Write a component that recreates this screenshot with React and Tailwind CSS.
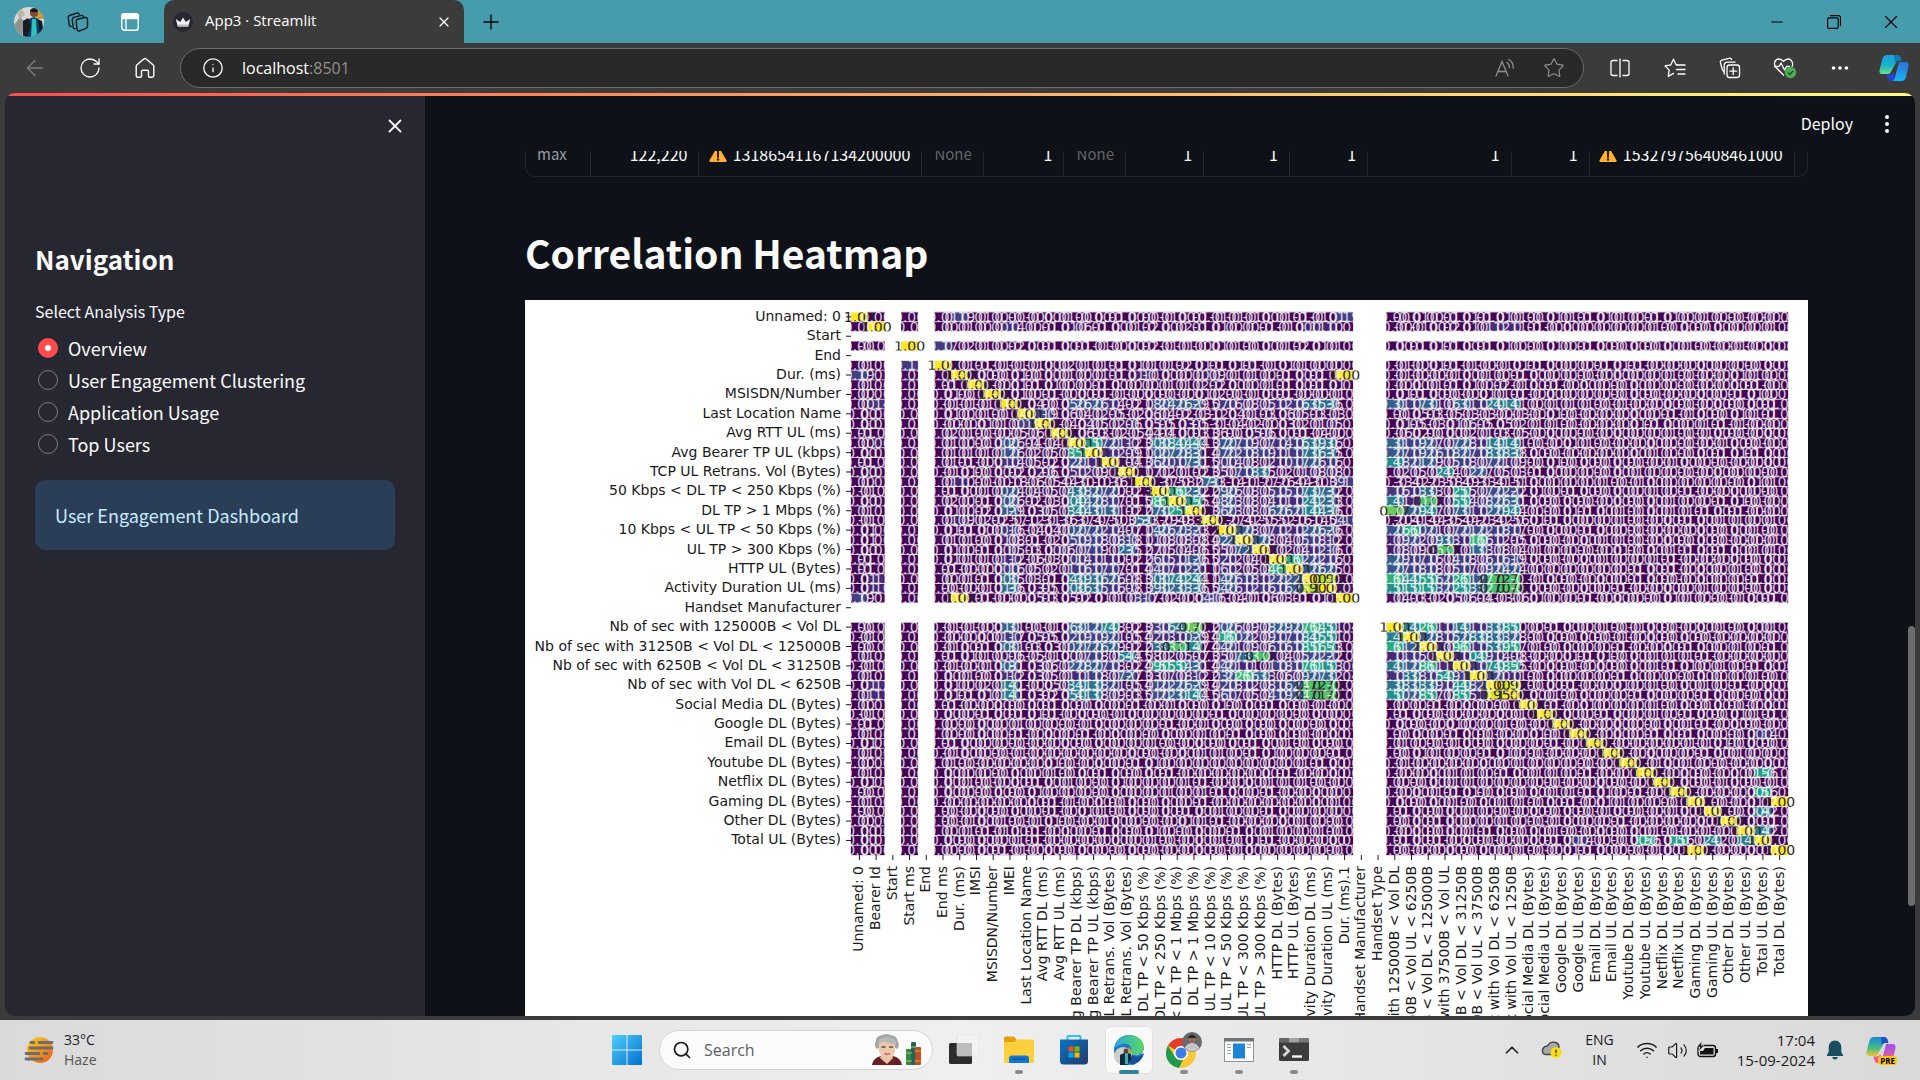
import React, { useState } from "react";
import {
  X,
  Plus,
  ArrowLeft,
  RotateCw,
  Info,
  Star,
  Minus,
  Ellipsis,
  EllipsisVertical,
  Search,
  ChevronUp,
  Wifi,
  Volume2,
} from "lucide-react";

/* ---------------------------------------------------------------- data */

const COLUMNS = [
  "Unnamed: 0",
  "Bearer Id",
  "Start",
  "Start ms",
  "End",
  "End ms",
  "Dur. (ms)",
  "IMSI",
  "MSISDN/Number",
  "IMEI",
  "Last Location Name",
  "Avg RTT DL (ms)",
  "Avg RTT UL (ms)",
  "Avg Bearer TP DL (kbps)",
  "Avg Bearer TP UL (kbps)",
  "TCP DL Retrans. Vol (Bytes)",
  "TCP UL Retrans. Vol (Bytes)",
  "DL TP < 50 Kbps (%)",
  "50 Kbps < DL TP < 250 Kbps (%)",
  "250 Kbps < DL TP < 1 Mbps (%)",
  "DL TP > 1 Mbps (%)",
  "UL TP < 10 Kbps (%)",
  "10 Kbps < UL TP < 50 Kbps (%)",
  "50 Kbps < UL TP < 300 Kbps (%)",
  "UL TP > 300 Kbps (%)",
  "HTTP DL (Bytes)",
  "HTTP UL (Bytes)",
  "Activity Duration DL (ms)",
  "Activity Duration UL (ms)",
  "Dur. (ms).1",
  "Handset Manufacturer",
  "Handset Type",
  "Nb of sec with 125000B < Vol DL",
  "Nb of sec with 1250B < Vol UL < 6250B",
  "Nb of sec with 31250B < Vol DL < 125000B",
  "Nb of sec with 37500B < Vol UL",
  "Nb of sec with 6250B < Vol DL < 31250B",
  "Nb of sec with 6250B < Vol UL < 37500B",
  "Nb of sec with Vol DL < 6250B",
  "Nb of sec with Vol UL < 1250B",
  "Social Media DL (Bytes)",
  "Social Media UL (Bytes)",
  "Google DL (Bytes)",
  "Google UL (Bytes)",
  "Email DL (Bytes)",
  "Email UL (Bytes)",
  "Youtube DL (Bytes)",
  "Youtube UL (Bytes)",
  "Netflix DL (Bytes)",
  "Netflix UL (Bytes)",
  "Gaming DL (Bytes)",
  "Gaming UL (Bytes)",
  "Other DL (Bytes)",
  "Other UL (Bytes)",
  "Total UL (Bytes)",
  "Total DL (Bytes)",
];

const EMPTY = [2, 4, 30, 31];
const TRAFFIC = [13, 14, 15, 16, 18, 19, 20, 22, 23, 24, 25, 26, 27, 28, 32, 33, 34, 35, 36, 37, 38, 39];
const LOW_RATE = [17, 21];

// Known coefficients, one list of [column, value] for each row.
const KNOWN = {
  0: [[6, 0.19], [29, 0.19]],
  1: [[9, 0.14], [13, 0.06], [27, 0.11], [28, 0.1], [38, 0.12], [39, 0.11]],
  3: [[5, 0.17]],
  9: [[13, 0.26], [14, 0.26], [15, 0.14], [16, 0.02], [18, 0.24], [19, 0.26], [20, 0.29], [22, 0.16], [23, 0.08], [24, 0.05], [25, 0.12], [26, 0.16], [27, 0.35], [28, 0.36], [32, 0.31], [33, 0.17], [34, 0.31], [35, 0.06], [36, 0.31], [37, 0.12], [38, 0.41], [39, 0.41]],
  10: [[11, 0.19], [17, -0.06]],
  13: [[14, 0.57], [15, 0.21], [16, 0.12], [18, 0.38], [19, 0.44], [20, 0.44], [22, 0.27], [23, 0.19], [24, 0.07], [25, 0.14], [26, 0.16], [27, 0.39], [28, 0.36], [32, 0.31], [33, 0.19], [34, 0.27], [35, 0.07], [36, 0.28], [37, 0.11], [38, 0.41], [39, 0.41]],
  14: [[15, 0.12], [16, 0.09], [18, 0.27], [19, 0.28], [20, 0.31], [22, 0.22], [23, 0.18], [24, 0.19], [25, 0.11], [26, 0.17], [27, 0.36], [28, 0.35], [32, 0.27], [33, 0.19], [34, 0.26], [35, 0.18], [36, 0.27], [37, 0.18], [38, 0.38], [39, 0.38]],
  15: [[16, 0.04], [18, 0.2], [19, 0.17], [20, 0.31], [22, 0.14], [23, 0.08], [24, 0.02], [27, 0.26], [28, 0.16], [32, 0.48], [33, 0.21], [34, 0.29], [35, 0.05], [36, 0.18], [37, 0.07], [38, 0.21], [39, 0.09]],
  16: [[18, 0.02], [19, 0.01], [20, 0.02], [22, 0.07], [23, 0.18], [24, 0.35], [25, 0.02], [26, 0.01], [27, 0.08], [28, 0.08], [32, 0.02], [33, 0.05], [34, 0.02], [35, 0.44], [36, 0.02], [37, 0.27], [38, 0.05], [39, 0.03]],
  17: [[21, 0.33], [6, 0.1], [29, 0.17], [11, -0.05]],
  18: [[19, 0.62], [20, 0.32], [22, 0.26], [23, 0.08], [24, 0.05], [25, 0.15], [26, 0.17], [27, 0.37], [28, 0.32], [32, 0.16], [33, 0.13], [34, 0.33], [35, 0.02], [36, 0.55], [37, 0.07], [38, 0.22], [39, 0.22]],
  19: [[20, 0.55], [22, 0.23], [23, 0.08], [24, 0.04], [25, 0.11], [26, 0.12], [27, 0.42], [28, 0.33], [32, 0.41], [33, 0.1], [34, 0.71], [35, 0.05], [36, 0.54], [37, 0.08], [38, 0.26], [39, 0.31]],
  20: [[22, 0.23], [23, 0.08], [24, 0.06], [25, 0.26], [26, 0.21], [27, 0.44], [28, 0.36], [32, 0.77], [33, 0.29], [34, 0.47], [35, 0.07], [36, 0.31], [37, 0.12], [38, 0.29], [39, 0.44]],
  21: [[6, 0.09], [29, 0.16]],
  22: [[23, 0.28], [24, 0.07], [25, 0.12], [26, 0.12], [27, 0.26], [28, 0.26], [32, 0.26], [33, 0.6], [34, 0.21], [35, 0.07], [36, 0.21], [37, 0.22], [38, 0.18], [39, 0.17]],
  23: [[24, 0.28], [25, 0.04], [26, 0.05], [27, 0.18], [28, 0.12], [32, 0.09], [33, 0.22], [34, 0.09], [35, 0.33], [36, 0.11], [37, 0.66], [38, 0.12], [39, 0.05]],
  24: [[25, 0.02], [26, 0.04], [27, 0.12], [28, 0.16], [32, 0.08], [33, 0.09], [34, 0.06], [35, 0.71], [36, 0.01], [37, 0.33], [38, 0.08], [39, 0.04]],
  25: [[26, 0.62], [27, 0.22], [28, 0.16], [32, 0.29], [33, 0.17], [34, 0.16], [35, 0.04], [36, 0.18], [37, 0.06], [38, 0.16], [39, 0.19]],
  26: [[27, 0.26], [28, 0.25], [32, 0.27], [33, 0.18], [34, 0.18], [35, 0.05], [36, 0.17], [37, 0.09], [38, 0.24], [39, 0.24]],
  27: [[28, 0.9], [32, 0.64], [33, 0.45], [34, 0.56], [35, 0.22], [36, 0.61], [37, 0.27], [38, 0.72], [39, 0.71]],
  28: [[32, 0.51], [33, 0.51], [34, 0.53], [35, 0.22], [36, 0.53], [37, 0.32], [38, 0.7], [39, 0.74]],
  32: [[33, 0.42], [34, 0.61], [35, 0.11], [36, 0.41], [37, 0.13], [38, 0.38], [39, 0.5]],
  33: [[34, 0.28], [35, 0.15], [36, 0.28], [37, 0.38], [38, 0.33], [39, 0.28]],
  34: [[35, 0.09], [36, 0.61], [37, 0.15], [38, 0.39], [39, 0.57]],
  35: [[36, 0.1], [37, 0.49], [38, 0.14], [39, 0.08]],
  36: [[37, 0.17], [38, 0.48], [39, 0.55]],
  37: [[38, 0.2], [39, 0.11]],
  38: [[39, 0.95]],
  6: [[29, 1]],
  43: [[54, 0.14]],
  47: [[54, 0.56]],
  49: [[54, 0.56]],
  50: [[55, 1], [54, 0.02]],
  51: [[54, 0.42]],
  53: [[54, 0.42]],
};

function noise(i, j) {
  const s = Math.sin(i * 127.1 + j * 311.7) * 43758.5453;
  return s - Math.floor(s);
}

function buildMatrix() {
  const n = COLUMNS.length;
  const m = COLUMNS.map(() => new Array(n).fill(0));
  for (let i = 0; i < n; i++) {
    for (let j = i; j < n; j++) {
      const r = noise(i + 1, j + 1);
      let v;
      if (i === j) v = 1;
      else if (j >= 40) v = (r - 0.45) * 0.014;
      else if (TRAFFIC.includes(i) && TRAFFIC.includes(j)) v = 0.04 + r * 0.14;
      else if (LOW_RATE.includes(i) || LOW_RATE.includes(j)) v = i < 9 ? (r - 0.5) * 0.05 : -0.1 - r * 0.5;
      else if (i < 9) v = (r - 0.4) * 0.03;
      else v = (r - 0.5) * 0.12;
      m[i][j] = v;
      m[j][i] = v;
    }
  }
  Object.entries(KNOWN).forEach(([row, list]) => {
    list.forEach(([col, v]) => {
      m[+row][col] = v;
      m[col][+row] = v;
    });
  });
  return m;
}

const MATRIX = buildMatrix();

const VIRIDIS = [
  [68, 1, 84],
  [72, 36, 117],
  [65, 68, 135],
  [53, 95, 141],
  [42, 120, 142],
  [33, 145, 140],
  [34, 168, 132],
  [68, 191, 112],
  [122, 209, 81],
  [189, 223, 38],
  [253, 231, 37],
];

function viridis(v) {
  const t = Math.min(1, Math.max(0, v)) * 10;
  const k = Math.min(9, Math.floor(t));
  const f = t - k;
  const c = VIRIDIS[k].map((a, x) => Math.round(a + (VIRIDIS[k + 1][x] - a) * f));
  return `rgb(${c[0]},${c[1]},${c[2]})`;
}

/* ------------------------------------------------------------- heatmap */

function Heatmap() {
  const x0 = 326;
  const y0 = 12;
  const cw = 937 / 56;
  const ch = 543 / 56;
  const ids = COLUMNS.map((_, k) => k).filter((k) => !EMPTY.includes(k));
  return (
    <svg
      viewBox="0 0 1283 780"
      className="block w-full bg-white"
      role="img"
      aria-label="Correlation heatmap"
      fontFamily="'DejaVu Sans', sans-serif"
      fontSize="14"
    >
      {ids.map((i) =>
        ids.map((j) => (
          <rect
            key={`${i}-${j}`}
            x={x0 + j * cw}
            y={y0 + i * ch}
            width={cw}
            height={ch}
            fill={viridis(MATRIX[i][j])}
            stroke={viridis(MATRIX[i][j])}
            strokeWidth="0.3"
          />
        ))
      )}
      {ids.map((i) => (
        <g key={i} textAnchor="middle">
          {ids.map((j) => (
            <text
              key={j}
              x={x0 + (j + 0.5) * cw}
              y={y0 + (i + 0.5) * ch + 5}
              fill={MATRIX[i][j] > 0.66 ? "#262626" : "#fff"}
              fillOpacity={MATRIX[i][j] > 0.66 ? 1 : 0.8}
            >
              {MATRIX[i][j].toFixed(2)}
            </text>
          ))}
        </g>
      ))}
      {COLUMNS.map((name, i) => (
        <line
          key={name}
          x1={x0}
          x2={x0 + 937}
          y1={y0 + i * ch}
          y2={y0 + i * ch}
          stroke="#fff"
          strokeOpacity="0.75"
        />
      ))}
      {COLUMNS.map((name, i) =>
        i % 2 === 0 ? (
          <g key={name} fill="#1a1a1a">
            <line
              x1={x0 - 5}
              x2={x0}
              y1={y0 + (i + 0.5) * ch}
              y2={y0 + (i + 0.5) * ch}
              stroke="#1a1a1a"
            />
            <text x={x0 - 10} y={y0 + (i + 0.5) * ch + 4} textAnchor="end">
              {name}
            </text>
          </g>
        ) : null
      )}
      {COLUMNS.map((name, j) => (
        <g key={name} fill="#1a1a1a" transform={`translate(${x0 + (j + 0.5) * cw} ${y0 + 543})`}>
          <line y1="0" y2="5" stroke="#1a1a1a" />
          <text transform="translate(4 11) rotate(-90)" textAnchor="end">
            {name}
          </text>
        </g>
      ))}
    </svg>
  );
}

/* --------------------------------------------------------------- icons */

function Avatar({ className }) {
  return (
    <svg viewBox="0 0 30 30" className={className} aria-hidden="true">
      <clipPath id="avatarClip">
        <circle cx="15" cy="15" r="15" />
      </clipPath>
      <g clipPath="url(#avatarClip)">
        <rect width="30" height="30" fill="#d8d8d2" />
        <path d="M0 18l6-8 4 4-2 16H0z" fill="#8d9490" />
        <path d="M3 5l5-3 3 6-6 4z" fill="#b9b5aa" />
        <path d="M20 0h10v12h-8z" fill="#c99a35" />
        <circle cx="20" cy="6" r="4" fill="#7c4a33" />
        <path d="M16 4c1-4 7-4 8 0l-1 1h-6z" fill="#15181d" />
        <path d="M12 13l8-3 8 4 2 16H10z" fill="#123a66" />
        <path d="M18 12l4 0 1 18h-6z" fill="#28c5bd" />
        <path d="M9 14l5-3 3 8-4 11H9z" fill="#171b22" />
        <path d="M24 13l4 2 1 10-3 3z" fill="#0e1a2a" />
      </g>
    </svg>
  );
}

function WorkspacesIcon() {
  return (
    <svg viewBox="0 0 22 22" className="size-[22px]" fill="none" stroke="#0d1a1e" strokeWidth="1.4" strokeLinejoin="round" strokeLinecap="round">
      <path d="M10.500 8.200l7.700-1.700q2-.3 2.300 1.600v7q-.1 1.500-1.500 2.200l-6.500 2.600q-2 .5-2.500-1.400l-.8-7.900q0-1.700 1.300-2.400z" />
      <path d="M8.300 17.600q-1.700.4-2.200-1.300l-.8-7.600q0-1.800 1.400-2.300l7.700-2q1.700-.2 2.200 1.400" />
      <path d="M4.200 15.400q-1.600.2-2-1.400l-1-7.300q0-1.600 1.300-2.200l7.600-2.500q1.500-.3 2 1.200" />
    </svg>
  );
}

function TabActionsIcon() {
  return (
    <svg viewBox="0 0 18 18" className="size-[18px]" fill="none" stroke="#fff" strokeWidth="1.4">
      <rect x=".8" y=".8" width="16.400" height="16.400" rx="2.500" />
      <path d="M1 1.500h16v4H1z" fill="#fff" />
      <path d="M5 5v12" />
    </svg>
  );
}

function CrownIcon() {
  return (
    <svg viewBox="0 0 20 20" className="size-5">
      <circle cx="10" cy="10" r="10" fill="#262730" />
      <path d="M2.800 7l4.400 3L10 5.500l2.800 4.500 4.400-3-2 7.500H4.800z" fill="#f3f3f3" />
      <path d="M4.300 12.500h11.400l-.5 2H4.800z" fill="#bdbdbd" />
    </svg>
  );
}

function ReadAloudIcon() {
  return (
    <svg viewBox="0 0 20 20" className="size-5" fill="none" stroke="#8f8f8f" strokeWidth="1.300" strokeLinecap="round">
      <path d="M1 18L7 3.500 13 18M3 13.500h8" />
      <path d="M12 4.500q2.500 1.500 2.300 5M13.500 1.500q5 2.500 4.700 8.500" />
    </svg>
  );
}

function SplitIcon() {
  return (
    <svg viewBox="0 0 20 20" className="size-5" fill="none" stroke="#fff" strokeWidth="1.300">
      <path d="M7.500 2.500H3Q1 2.500 1 4.500v11q0 2 2 2h4.500M12.500 2.500H17q2 0 2 2v11q0 2-2 2h-4.500M10 .5v19" />
    </svg>
  );
}

function FavoritesIcon() {
  return (
    <svg viewBox="0 0 22 20" className="h-5 w-[22px]" fill="none" stroke="#fff" strokeWidth="1.300" strokeLinejoin="round" strokeLinecap="round">
      <path d="M14 7h-1.800L9.500 1.200 6.700 7 1 7.900l4.200 4.200-1 6.300 5.300-3" />
      <path d="M14 7h7M12.500 11.500H21M14 16h7" />
    </svg>
  );
}

function CollectionsIcon() {
  return (
    <svg viewBox="0 0 22 22" className="size-[22px]" fill="none" stroke="#fff" strokeWidth="1.300" strokeLinecap="round">
      <rect x="8" y="8" width="12.500" height="12.500" rx="2.500" />
      <path d="M14.200 11v6.500M11 14.200h6.500" />
      <path d="M5 14.500q-1-.5-1.600-1.800L1.500 6q-.6-2.200 1.400-3L10 1.300q2-.5 2.600 1.200" />
      <path d="M5.200 17V8.500q0-3.300 3.300-3.300H16" />
    </svg>
  );
}

function EssentialsIcon() {
  return (
    <svg viewBox="0 0 24 22" className="h-[22px] w-6" fill="none">
      <path d="M10.500 18L3 10.500Q0 6.500 2.800 3.300q3.700-3 7.700 1 4-4 7.700-1 2.300 2.800 1 6" stroke="#fff" strokeWidth="1.300" strokeLinecap="round" />
      <path d="M1 9.500h5l2-3.500 3.500 7 2-3.500H17" stroke="#fff" strokeWidth="1.300" strokeLinejoin="round" />
      <circle cx="17.500" cy="15.500" r="5.700" fill="#4caf50" />
      <path d="M15 15.700l1.800 1.800 3.400-3.700" stroke="#1d3b1e" strokeWidth="1.200" />
    </svg>
  );
}

function CopilotIcon({ pre }) {
  const id = pre ? "p" : "t";
  return (
    <svg viewBox="0 0 30 28" className="h-7 w-[30px]" aria-hidden="true">
      <defs>
        <linearGradient id={`${id}a`} x1="0" y1="0" x2="0" y2="1">
          <stop offset="0" stopColor={pre ? "#1788e0" : "#1b9de2"} />
          <stop offset=".55" stopColor={pre ? "#3fb98a" : "#18b4c9"} />
          <stop offset="1" stopColor={pre ? "#f2c62d" : "#6be08b"} />
        </linearGradient>
        <linearGradient id={`${id}b`} x1="0" y1="0" x2="0" y2="1">
          <stop offset="0" stopColor={pre ? "#a24df0" : "#2d6fdb"} />
          <stop offset="1" stopColor={pre ? "#f5707c" : "#19b5f5"} />
        </linearGradient>
      </defs>
      <path d="M12 1h6q2.500 0 3.300 2.500L22.300 7H18L11 19.500 9 20H3Q0 20 .5 16L3.500 4.500Q4.500 1 8 1z" fill={`url(#${id}a)`} />
      <path d="M15 1h3.500q2.300 0 3 2.500l1 3.500h-4q-2 0-2.700 2.500z" fill={pre ? "#1c50c7" : "#0d7fae"} />
      <path d="M18 27h-6.500q-2.300 0-3-2.500l-1-4h4q2 0 2.600-2.500z" fill={pre ? "#ef5a8a" : "#2146d6"} />
      <path d="M20 8h6.500q3.500 0 3 4l-2.500 11q-1 4-4.500 4H13q2 0 2.700-2.500z" fill={`url(#${id}b)`} />
    </svg>
  );
}

function WarningSign() {
  return (
    <svg viewBox="0 0 18 16" className="h-4 w-[18px] shrink-0" role="img" aria-label="Warning">
      <path d="M8 1.300q1-1.600 2 0l7.500 13q.5 1.400-1 1.700h-15Q0 15.700.5 14.300z" fill="#ffb02e" />
      <path d="M9 5v6" stroke="#2d2100" strokeWidth="2" strokeLinecap="round" />
      <circle cx="9" cy="13.500" r="1.200" fill="#2d2100" />
    </svg>
  );
}

function HazeIcon() {
  return (
    <svg viewBox="0 0 30 28" className="h-7 w-[30px]" aria-hidden="true">
      <defs>
        <linearGradient id="haze" x1="0" y1="0" x2="1" y2="1">
          <stop offset="0" stopColor="#fbd320" />
          <stop offset="1" stopColor="#ea5b16" />
        </linearGradient>
      </defs>
      <circle cx="16" cy="14" r="13" fill="url(#haze)" />
      <g stroke="#6d6d70" strokeWidth="2.800" strokeLinecap="round">
        <path d="M7 6.500h3M15 6.500h13M6 12h22M2 17.500h13M20 17.500h3M2 23h16" />
      </g>
    </svg>
  );
}

function WindowsIcon() {
  return (
    <svg viewBox="0 0 30 30" className="size-[30px]" aria-hidden="true">
      <defs>
        <linearGradient id="win" x1="0" y1="0" x2="1" y2="1">
          <stop offset="0" stopColor="#4fd0fb" />
          <stop offset="1" stopColor="#0070d0" />
        </linearGradient>
      </defs>
      <path d="M1 0h13.500v14.500H0V1q0-1 1-1zM15.500 0H29q1 0 1 1v13.500H15.500zM0 15.500h14.500V30H1q-1 0-1-1zM15.500 15.500H30V29q0 1-1 1H15.500z" fill="url(#win)" />
    </svg>
  );
}

function SearchArt() {
  return (
    <svg viewBox="0 0 50 32" className="h-8 w-[50px]" aria-hidden="true">
      <path d="M0 31q1-7 9-9h12q8 2 9 9z" fill="#6b2024" />
      <path d="M10 19h10l1 5-6 6-7-6z" fill="#e8c3a5" />
      <path d="M5 15Q1 11 4 7 4 2 9 1.500q6-3 11 0 5 .5 5.500 5.500 3 4-.5 8l-3-2H8z" fill="#a3a6a6" />
      <path d="M7 11q0-4 8-4t8 4q1 13-8 13T7 11z" fill="#ecc9ae" />
      <path d="M6 11q1-3 4-4 6 2 14 4l0-4q-3-4-9-4T6 7z" fill="#b5b8b8" />
      <path d="M9.500 13h4M17 13h4" stroke="#5d4b41" strokeWidth="1.400" />
      <path d="M12.500 19.500q2.500 1.500 5.500 0" stroke="#b04a44" strokeWidth="1.200" fill="none" />
      <rect x="34" y="15" width="6" height="16" rx="1" fill="#2f8b4a" />
      <rect x="39" y="8" width="5" height="23" rx="1" fill="#1d6661" />
      <rect x="43" y="13" width="6" height="18" rx="1" fill="#b9501f" />
      <path d="M34 19h6M34 27h6M39 13h5M43 17h6M43 27h6" stroke="#e0b14a" strokeWidth="1" />
    </svg>
  );
}

function TaskViewIcon() {
  return (
    <svg viewBox="0 0 30 30" className="size-[30px]" aria-hidden="true">
      <rect x="0" y="8" width="23" height="21" rx="1.500" fill="#2c2c2c" />
      <rect x="8" y="0" width="22" height="21" rx="1.500" fill="#f4f4f4" fillOpacity=".8" stroke="#d8d8d8" strokeWidth=".6" />
      <path d="M8 8h15v13H8z" fill="#bdbdbd" />
    </svg>
  );
}

function FolderIcon() {
  return (
    <svg viewBox="0 0 30 28" className="h-7 w-[30px]" aria-hidden="true">
      <path d="M0 2q0-1.500 1.500-1.500H10l3 3.500H28q2 0 2 2v4H0z" fill="#e2a20c" />
      <path d="M0 6h10l3-2.500H28.500Q30 3.500 30 5v20.500q0 1.500-1.500 1.500h-27Q0 27 0 25.500z" fill="#fccf3c" />
      <path d="M5 27v-4.500Q5 19.500 8 19.500h14q3 0 3 3V27z" fill="#1277d3" />
      <path d="M9 23.200h12" stroke="#0b4f94" strokeWidth="1.400" strokeLinecap="round" />
    </svg>
  );
}

function StoreIcon() {
  return (
    <svg viewBox="0 0 30 30" className="size-[30px]" aria-hidden="true">
      <defs>
        <linearGradient id="store" x1="0" y1="0" x2="1" y2="1">
          <stop offset="0" stopColor="#0a73c4" />
          <stop offset="1" stopColor="#213a6d" />
        </linearGradient>
      </defs>
      <path d="M8.500 5.500V1.800q0-.8.8-.8h11.400q.8 0 .8.800v3.700" stroke="#2cc3f2" strokeWidth="2" fill="none" />
      <path d="M1 4.500h28V26q0 3.500-3.500 3.500h-21Q1 29.500 1 26z" fill="url(#store)" />
      <path d="M9.500 11.500h5v5h-5z" fill="#f25022" />
      <path d="M15.500 11.500h5v5h-5z" fill="#7fba00" />
      <path d="M9.500 17.500h5v5h-5z" fill="#00a4ef" />
      <path d="M15.500 17.500h5v5h-5z" fill="#ffb900" />
    </svg>
  );
}

function EdgeIcon() {
  return (
    <svg viewBox="0 0 30 30" className="size-[30px]" aria-hidden="true">
      <defs>
        <linearGradient id="edge" x1="0" y1="0" x2="1" y2="0">
          <stop offset="0" stopColor="#2aa8e0" />
          <stop offset="1" stopColor="#5bd95c" />
        </linearGradient>
      </defs>
      <circle cx="15" cy="15" r="15" fill="#1b74c8" />
      <path d="M0 14Q2 1 15 0q14 1 15 12-1 8-9 8-5 0-6-2 3-1 2-5-2-5-8-4-6 1-9 5z" fill="url(#edge)" />
      <path d="M17 20q6 4 13-1-3 8-11 11-8-3-2-10z" fill="#134f9b" />
      <path d="M15 18q4 4 15 0l0-4q-2 7-9 6-4 0-6-2z" fill="#f9f9f9" />
      <g>
        <circle cx="9" cy="21" r="9" fill="#cfd0c8" />
        <circle cx="12" cy="16" r="2.500" fill="#6e4230" />
        <path d="M6 20l6-3 5 2 1 5-5 6H6z" fill="#14263c" />
        <path d="M11 18h3v11h-3z" fill="#28b9b2" />
        <path d="M14 12l4 4-1 3-3-3z" fill="#c79a36" />
      </g>
    </svg>
  );
}

function ChromeIcon() {
  return (
    <svg viewBox="0 0 36 36" className="size-9" aria-hidden="true">
      <circle cx="15" cy="21" r="15" fill="#fcc934" />
      <path d="M15 21L2 13.500A15 15 0 0 1 28 13.500H15z" fill="#e33b2e" />
      <path d="M2 13.500L9 25q3 4 8 3l-4 8A15 15 0 0 1 2 13.500z" fill="#229a4c" />
      <circle cx="15" cy="21" r="7" fill="#fff" />
      <circle cx="15" cy="21" r="5.500" fill="#3b7ded" />
      <circle cx="26" cy="10" r="10" fill="#67696b" />
      <circle cx="26" cy="7" r="4" fill="#9c6a55" />
      <path d="M22 5q4-5 8 0v1h-8z" fill="#222" />
      <path d="M18.500 16q3-5 7.500-5t7.500 5q-7 7-15 0z" fill="#c5c5cc" />
    </svg>
  );
}

function DocWindowIcon() {
  return (
    <svg viewBox="0 0 30 24" className="h-6 w-[30px]" aria-hidden="true">
      <rect x=".5" y=".5" width="29" height="23" fill="#fdfdfd" stroke="#8d9296" />
      <path d="M0 0h30v3.500H0z" fill="#70757a" />
      <rect x="9" y="5.500" width="12" height="15" fill="#1e84d6" />
      <path d="M3 6.500h4M3 9.500h4M3 12.500h4M3 15.500h4M23 6.500h4M23 9.500h4" stroke="#a5a5a5" strokeWidth="1" />
    </svg>
  );
}

function TerminalIcon() {
  return (
    <svg viewBox="0 0 30 24" className="h-6 w-[30px]" aria-hidden="true">
      <rect width="30" height="23" rx="1.500" fill="#3c3c3c" />
      <path d="M1.500 0H10v4.500H0V1.500Q0 0 1.500 0z" fill="#666" />
      <path d="M10 0h10v4.500H10z" fill="#a2a2a2" />
      <path d="M20 0h8.500Q30 0 30 1.500v3H20z" fill="#777" />
      <path d="M4.500 8l5 5-5 5" stroke="#d6d6d6" strokeWidth="2.800" fill="none" />
      <path d="M13 18.500h10" stroke="#f4f4f4" strokeWidth="2.400" />
    </svg>
  );
}

function CloudIcon() {
  return (
    <svg viewBox="0 0 22 20" className="h-5 w-[22px]" aria-hidden="true">
      <path d="M5 14.500q-4-.5-3.500-4.500 1-4 5-4 3-5 8-3.500 3.500 1 3.500 4.500l-6 7.500z" fill="#a9a9a9" stroke="#444" strokeWidth="1.400" />
      <circle cx="15" cy="12.500" r="5.500" fill="#fbdc04" />
      <path d="M15 9.500v3.500M15 14.500v1.300" stroke="#333" strokeWidth="1.400" />
    </svg>
  );
}

function BatteryIcon() {
  return (
    <svg viewBox="0 0 22 18" className="h-[18px] w-[22px]" aria-hidden="true">
      <rect x="1" y="4.500" width="17.500" height="11" rx="2.500" fill="none" stroke="#111" strokeWidth="1.400" />
      <path d="M8 7h8.500v6.500H3V10h3z" fill="#111" />
      <path d="M19 8h2v4h-2z" fill="#111" />
      <path d="M5 0L0 6h3L1.500 10.500 7 4.500H4z" fill="#111" stroke="#dcdcdc" strokeWidth=".5" />
    </svg>
  );
}

function BellIcon() {
  return (
    <svg viewBox="0 0 18 20" className="h-5 w-[18px]" fill="#174f5e" aria-hidden="true">
      <path d="M9 .5q6 .5 6.300 6.500v5L17 15v1H1v-1l1.700-3V7Q3 1 9 .5zM6 17h6q-1 2.500-3 2.500T6 17z" />
    </svg>
  );
}

/* -------------------------------------------------------------- chrome */

const ICON_BUTTON = "flex w-[55px] shrink-0 items-center justify-center text-white";

function TabBar() {
  return (
    <div className="flex h-[43px] shrink-0 items-stretch bg-[#469bad] text-black">
      <button aria-label="Profile" className="flex w-[53px] items-center justify-center pl-1">
        <Avatar className="size-[30px]" />
      </button>
      <button aria-label="Workspaces" className="flex w-[49px] items-center justify-center">
        <WorkspacesIcon />
      </button>
      <button aria-label="Tab actions" className="flex w-[56px] items-center justify-center">
        <TabActionsIcon />
      </button>
      <div className="ml-1.5 flex w-[300px] items-center rounded-t-[10px] bg-[#3b3b3b] pr-2.5 pl-[9px] text-white">
        <CrownIcon />
        <span className="ml-3 flex-1 pb-0.5 text-[15px]">App3 · Streamlit</span>
        <button aria-label="Close tab" className="p-0.5">
          <X className="size-4" strokeWidth={1.8} />
        </button>
      </div>
      <button aria-label="New tab" className="flex w-[53px] items-center justify-center">
        <Plus className="size-6" strokeWidth={1.3} />
      </button>
      <div className="flex-1" />
      <div className="flex pr-px">
        <button aria-label="Minimize" className="flex w-[57px] items-center justify-center">
          <Minus className="size-[18px]" strokeWidth={1.3} />
        </button>
        <button aria-label="Restore" className="flex w-[57px] items-center justify-center">
          <svg viewBox="0 0 14 14" className="size-3.5" fill="none" stroke="currentColor" strokeWidth="1.200">
            <rect x=".6" y="2.800" width="10.600" height="10.600" rx="1.500" />
            <path d="M3 .7h8.500q2 0 2 2V11" />
          </svg>
        </button>
        <button aria-label="Close" className="flex w-[57px] items-center justify-center">
          <X className="size-[22px]" strokeWidth={1.2} />
        </button>
      </div>
    </div>
  );
}

function Toolbar() {
  return (
    <div className="flex h-[50px] shrink-0 items-stretch bg-[#3b3b3b] pl-[7px]">
      <button aria-label="Back" className={ICON_BUTTON}>
        <ArrowLeft className="size-[26px] text-[#7d7d7d]" strokeWidth={1.2} />
      </button>
      <button aria-label="Refresh" className={ICON_BUTTON}>
        <RotateCw className="size-6" strokeWidth={1.3} />
      </button>
      <button aria-label="Home" className={ICON_BUTTON}>
        <svg viewBox="0 0 20 22" className="h-[22px] w-5" fill="none" stroke="currentColor" strokeWidth="1.400" strokeLinejoin="round">
          <path d="M1.200 9.500q0-1 .8-1.700L8.800 2q1.200-1 2.400 0L18 7.800q.8.700.8 1.700v9q0 1.700-1.700 1.700h-2.400q-1.200 0-1.200-1.200v-4.500q0-1.200-1.200-1.200H7.700q-1.200 0-1.200 1.200V19q0 1.200-1.200 1.200H2.900q-1.700 0-1.700-1.700z" />
        </svg>
      </button>
      <div className="my-[5px] ml-2 flex flex-1 items-center rounded-full border border-[#6a6a6a] bg-[#292929] pr-[18px] pl-[21px]">
        <Info className="size-[22px] text-white" strokeWidth={1.4} />
        <div className="relative ml-[18px] flex-1 text-[16px] text-white">
          <span aria-hidden="true">
            localhost<span className="text-[#8f8f8f]">:8501</span>
          </span>
          <input
            aria-label="Address"
            defaultValue=""
            className="absolute inset-0 w-full bg-transparent outline-none"
          />
        </div>
        <button aria-label="Read aloud">
          <ReadAloudIcon />
        </button>
        <button aria-label="Add to favorites" className="ml-7">
          <Star className="size-[22px] text-[#8f8f8f]" strokeWidth={1.3} />
        </button>
      </div>
      <div className="ml-2 flex">
        <button aria-label="Split screen" className={ICON_BUTTON}>
          <SplitIcon />
        </button>
        <button aria-label="Favorites" className={ICON_BUTTON}>
          <FavoritesIcon />
        </button>
        <button aria-label="Collections" className={ICON_BUTTON}>
          <CollectionsIcon />
        </button>
        <button aria-label="Browser essentials" className={ICON_BUTTON}>
          <EssentialsIcon />
        </button>
        <button aria-label="More" className={ICON_BUTTON}>
          <Ellipsis className="size-[22px]" fill="currentColor" strokeWidth={2} />
        </button>
        <button aria-label="Copilot" className="flex w-[53px] shrink-0 items-center justify-center">
          <CopilotIcon />
        </button>
      </div>
    </div>
  );
}

/* ----------------------------------------------------------- streamlit */

const OPTIONS = ["Overview", "User Engagement Clustering", "Application Usage", "Top Users"];

function Sidebar() {
  const [selected, setSelected] = useState(OPTIONS[0]);
  return (
    <aside className="flex w-[420px] shrink-0 flex-col bg-[#262730] px-[30px] text-[#fafafa]">
      <div className="flex h-[60px] items-center justify-end">
        <button aria-label="Close sidebar" className="-mr-[15px] p-1">
          <X className="size-[22px]" strokeWidth={2} />
        </button>
      </div>
      <h2 className="mt-[85px] text-[26px] leading-9 font-bold">Navigation</h2>
      <fieldset className="mt-[22px]">
        <legend className="text-[16px] leading-6">Select Analysis Type</legend>
        <div className="mt-[9px] flex flex-col">
          {OPTIONS.map((name) => (
            <label key={name} className="flex h-8 items-center gap-2.5 pl-[3px] text-[18px]">
              <input
                type="radio"
                name="analysis"
                checked={selected === name}
                onChange={() => setSelected(name)}
                className="size-5 appearance-none rounded-full border border-[#7d7e84] checked:border-[7px] checked:border-[#ff4b4b] checked:bg-white"
              />
              {name}
            </label>
          ))}
        </div>
      </fieldset>
      <div className="mt-5 flex h-[70px] items-center rounded-[10px] bg-[#2b3e57] px-5 text-[18px] text-[#c7ebff]">
        User Engagement Dashboard
      </div>
    </aside>
  );
}

function StatsTable() {
  const cells = [
    { w: "w-[8.500%]", v: "122,220" },
    { w: "w-[17.400%]", v: "13186541167134200000", warn: true },
    { w: "w-[4.800%]", v: "None" },
    { w: "w-[6.300%]", v: "1" },
    { w: "w-[4.800%]", v: "None" },
    { w: "w-[6.100%]", v: "1" },
    { w: "w-[6.700%]", v: "1" },
    { w: "w-[6.100%]", v: "1" },
    { w: "w-[11.200%]", v: "1" },
    { w: "w-[6.100%]", v: "1" },
    { w: "w-[16%]", v: "153279756408461000", warn: true },
  ];
  return (
    <div className="overflow-hidden rounded-b-[10px] border-x border-b border-[#23252c]">
      <table className="w-full table-fixed border-collapse leading-5 text-[#fafafa]">
        <tbody>
          <tr className="h-[44px]">
            <th scope="row" className="w-[5%] border-r border-[#23252c] px-[11px] text-left text-[15px] font-normal text-[#9a9ba0]">
              max
            </th>
            {cells.map((c, i) => (
              <td
                key={i}
                className={`${c.w} border-r border-[#23252c] px-[11px] text-right whitespace-nowrap ${
                  c.v === "None" ? "text-[15px] text-[#63656b]" : "text-[16px]"
                }`}
              >
                {c.warn ? (
                  <span className="flex items-center justify-end gap-1.5">
                    <WarningSign />
                    {c.v}
                  </span>
                ) : (
                  c.v
                )}
              </td>
            ))}
            <td className="w-[1%]" />
          </tr>
        </tbody>
      </table>
    </div>
  );
}

function MainArea() {
  return (
    <main className="flex min-w-0 flex-1 flex-col bg-[#0e1117] text-[#fafafa]">
      <header className="flex h-[55px] shrink-0 items-center justify-end gap-[22px] pr-4">
        <button className="pb-0.5 text-[16px]">Deploy</button>
        <button aria-label="Main menu">
          <EllipsisVertical className="size-6" fill="currentColor" strokeWidth={2} />
        </button>
      </header>
      <div className="flex min-h-0 flex-1">
        <div className="flex min-w-0 flex-1 flex-col justify-start overflow-hidden px-[100px]">
          <div className="-mt-[19px] shrink-0 [clip-path:inset(19px_0_0_0)]">
            <StatsTable />
          </div>
          <h1 className="mt-[45px] shrink-0 text-[39px] leading-[60px] font-bold">Correlation Heatmap</h1>
          <div className="mt-[18px] shrink-0">
            <Heatmap />
          </div>
        </div>
        <div className="flex w-[7px] shrink-0 flex-col" aria-hidden="true">
          <div className="flex-[474]" />
          <div className="flex-[280] rounded-full bg-[#6b6c70]" />
          <div className="flex-[110]" />
        </div>
      </div>
    </main>
  );
}

/* ------------------------------------------------------------- taskbar */

function TaskButton({ label, children, state }) {
  return (
    <button aria-label={label} className="relative flex w-[55px] items-center justify-center">
      <span
        className={`flex size-[48px] items-center justify-center rounded-md ${
          state === "active" ? "border border-[#e2e2e2] bg-[#f9f9f9]" : ""
        }`}
      >
        {children}
      </span>
      {state && (
        <span
          className={`absolute bottom-1.5 left-1/2 h-1 -translate-x-1/2 rounded-full ${
            state === "active" ? "w-5 bg-[#2a8494]" : "w-2 bg-[#8b8b8b]"
          }`}
        />
      )}
    </button>
  );
}

function Taskbar() {
  return (
    <footer className="grid h-[60px] shrink-0 grid-cols-[1fr_auto_1fr] bg-linear-to-r from-[#dadada] via-[#efefef] to-[#d9d9d9] text-[14px] text-[#1b1b1b]">
      <button className="flex items-center gap-2.5 justify-self-start pl-6 text-left">
        <HazeIcon />
        <span className="leading-5">
          33°C
          <span className="block text-[#555]">Haze</span>
        </span>
      </button>
      <div className="flex">
        <TaskButton label="Start">
          <WindowsIcon />
        </TaskButton>
        <label className="my-2.5 mr-[3px] ml-[5px] flex w-[274px] items-center rounded-full border border-[#d4d4d4] bg-[#fbfbfb] pr-2.5 pl-3">
          <Search className="size-5 text-[#1b1b1b]" strokeWidth={2} />
          <input
            aria-label="Search"
            placeholder="Search"
            className="ml-3 w-0 flex-1 bg-transparent text-[16px] outline-none placeholder:text-[#5f5f5f]"
          />
          <SearchArt />
        </label>
        <TaskButton label="Task view">
          <TaskViewIcon />
        </TaskButton>
        <TaskButton label="File Explorer" state="open">
          <FolderIcon />
        </TaskButton>
        <TaskButton label="Microsoft Store">
          <StoreIcon />
        </TaskButton>
        <TaskButton label="Edge" state="active">
          <EdgeIcon />
        </TaskButton>
        <TaskButton label="Chrome" state="open">
          <ChromeIcon />
        </TaskButton>
        <TaskButton label="Document viewer" state="open">
          <DocWindowIcon />
        </TaskButton>
        <TaskButton label="Terminal" state="open">
          <TerminalIcon />
        </TaskButton>
      </div>
      <div className="flex items-center justify-self-end pr-6">
        <button aria-label="Show hidden icons">
          <ChevronUp className="size-[22px]" strokeWidth={1.8} />
        </button>
        <button aria-label="OneDrive" className="ml-[18px]">
          <CloudIcon />
        </button>
        <button className="ml-[22px] text-center leading-5">
          ENG
          <span className="block">IN</span>
        </button>
        <button aria-label="Network, sound and battery" className="ml-[22px] flex items-center gap-[9px]">
          <Wifi className="size-[22px]" strokeWidth={1.6} />
          <Volume2 className="size-[21px]" strokeWidth={1.4} />
          <BatteryIcon />
        </button>
        <button className="ml-[18px] text-right text-[15px] leading-5">
          17:04
          <span className="block">15-09-2024</span>
        </button>
        <button aria-label="Notifications" className="ml-[11px]">
          <BellIcon />
        </button>
        <button aria-label="Copilot preview" className="relative ml-[22px]">
          <CopilotIcon pre />
          <span className="absolute -right-px -bottom-px rounded-[3px] bg-[#ffc60a] px-0.5 text-[8px] leading-[9px] font-bold text-black">
            PRE
          </span>
        </button>
      </div>
    </footer>
  );
}

export default function App() {
  return (
    <div className="flex h-screen flex-col overflow-hidden bg-[#3b3b3b] font-['Open_Sans',sans-serif]">
      <TabBar />
      <Toolbar />
      <div className="mr-[5px] mb-1 ml-[5px] flex min-h-0 flex-1 flex-col overflow-hidden rounded-[10px] font-['Noto_Sans_CJK_JP','Noto_Sans',sans-serif]">
        <div className="h-[3px] shrink-0 bg-linear-to-r from-[#ff4b4b] to-[#fffd80]" />
        <div className="flex min-h-0 flex-1">
          <Sidebar />
          <MainArea />
        </div>
      </div>
      <Taskbar />
    </div>
  );
}
